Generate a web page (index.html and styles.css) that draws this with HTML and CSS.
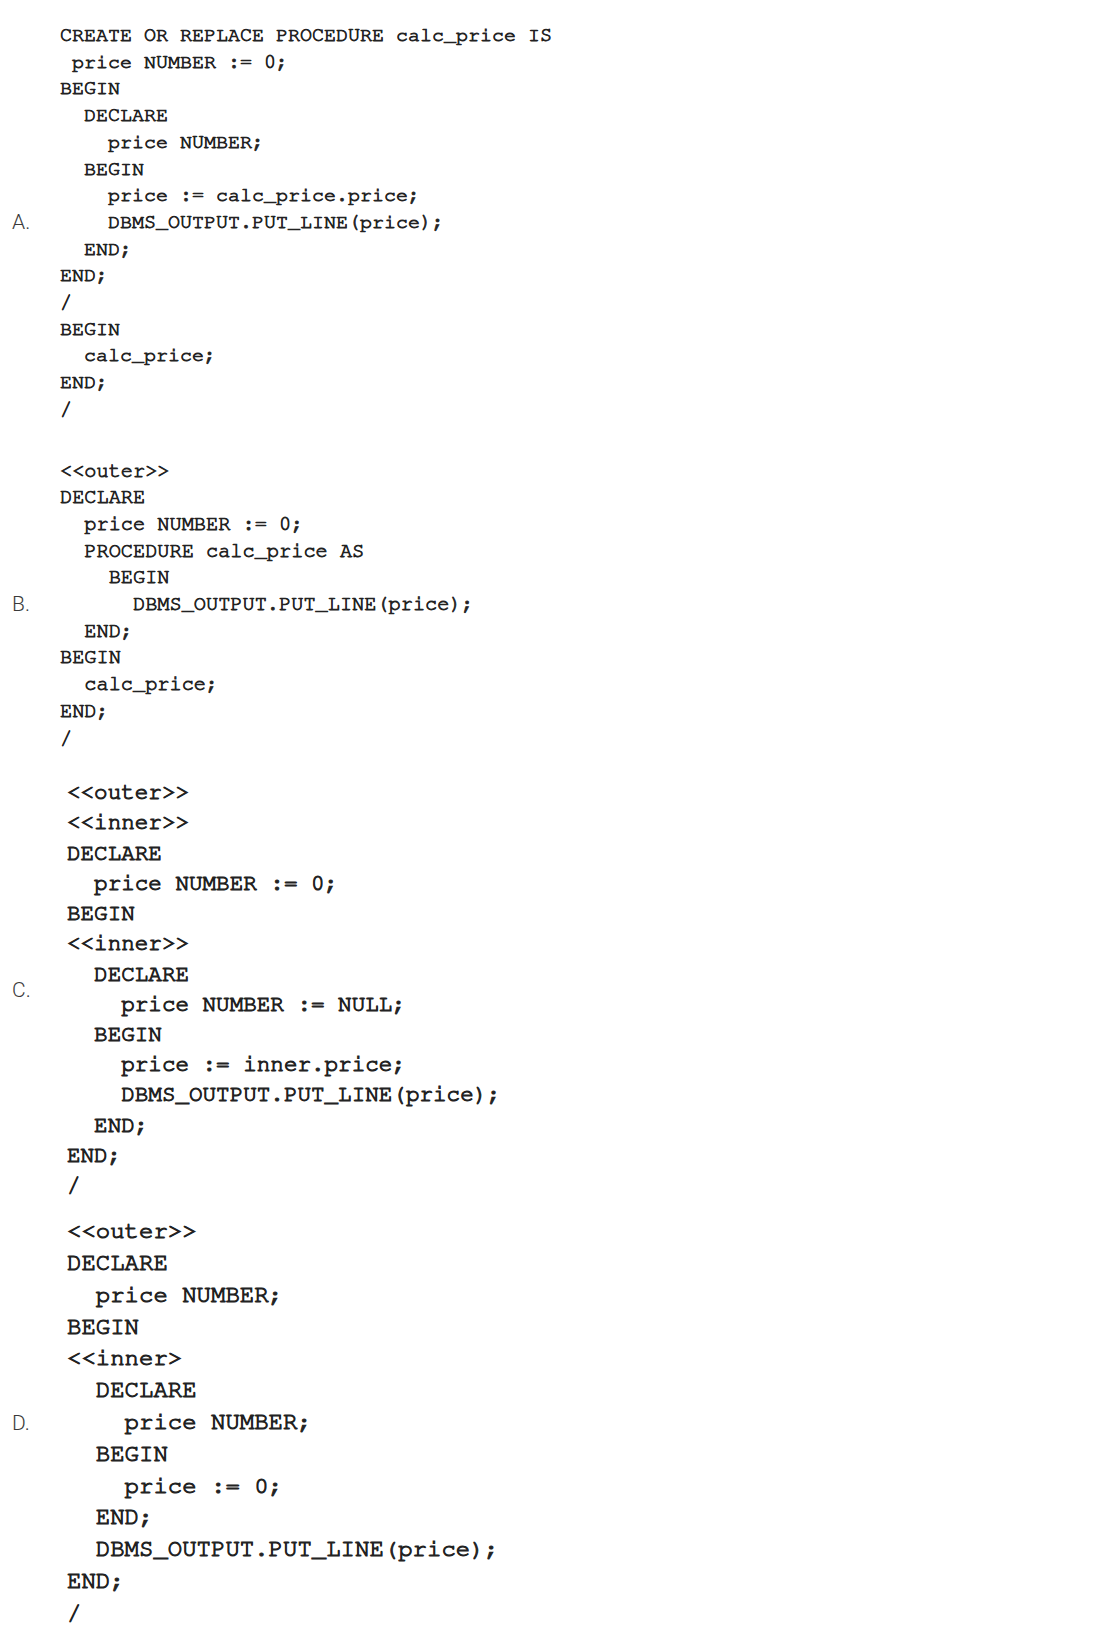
FILE: index.html
```html
<!DOCTYPE html>
<html lang="en">
<head>
<meta charset="utf-8">
<title>PL/SQL options</title>
<link rel="stylesheet" href="styles.css">
</head>
<body>
<main class="options">
  <section class="opt opt-a">
    <span class="lbl">A.</span>
<pre class="code">CREATE OR REPLACE PROCEDURE calc_price IS
 price NUMBER := 0;
BEGIN
  DECLARE
    price NUMBER;
  BEGIN
    price := calc_price.price;
    DBMS_OUTPUT.PUT_LINE(price);
  END;
END;
/
BEGIN
  calc_price;
END;
/</pre>
  </section>
  <section class="opt opt-b">
    <span class="lbl">B.</span>
<pre class="code">&lt;&lt;outer&gt;&gt;
DECLARE
  price NUMBER := 0;
  PROCEDURE calc_price AS
    BEGIN
      DBMS_OUTPUT.PUT_LINE(price);
  END;
BEGIN
  calc_price;
END;
/</pre>
  </section>
  <section class="opt opt-c">
    <span class="lbl">C.</span>
<pre class="code">&lt;&lt;outer&gt;&gt;
&lt;&lt;inner&gt;&gt;
DECLARE
  price NUMBER := 0;
BEGIN
&lt;&lt;inner&gt;&gt;
  DECLARE
    price NUMBER := NULL;
  BEGIN
    price := inner.price;
    DBMS_OUTPUT.PUT_LINE(price);
  END;
END;
/</pre>
  </section>
  <section class="opt opt-d">
    <span class="lbl">D.</span>
<pre class="code">&lt;&lt;outer&gt;&gt;
DECLARE
  price NUMBER;
BEGIN
&lt;&lt;inner&gt;
  DECLARE
    price NUMBER;
  BEGIN
    price := 0;
  END;
  DBMS_OUTPUT.PUT_LINE(price);
END;
/</pre>
  </section>
</main>
</body>
</html>
```
FILE: styles.css
```css
html, body {
  margin: 0;
  padding: 0;
  background: #ffffff;
}

.options {
  display: flex;
  flex-direction: column;
  padding-top: 22px;
}

.opt {
  display: flex;
  align-items: center;
}

.lbl {
  flex: 0 0 auto;
  box-sizing: border-box;
  padding-left: 12px;
  font-family: Roboto, "Liberation Sans", sans-serif;
  font-weight: 300;
  font-size: 21px;
  color: #3a3a3a;
}

.code {
  margin: 0;
  font-family: "Nimbus Mono PS", "Nimbus Mono L", "FreeMono", "Liberation Mono", monospace;
  color: #222222;
  white-space: pre;
  -webkit-text-stroke: 0.8px #222222;
}

.opt-a .lbl,
.opt-b .lbl {
  width: 60px;
}

.opt-c .lbl,
.opt-d .lbl {
  width: 67px;
}

.opt-a .code {
  font-size: 20px;
  line-height: 26.7px;
}

.opt-b {
  margin-top: 35px;
}

.opt-b .code {
  font-size: 20.3px;
  line-height: 26.7px;
}

.opt-c {
  margin-top: 27px;
}

.opt-c .code {
  font-size: 22.6px;
  line-height: 30.2px;
  -webkit-text-stroke: 1px #222222;
}

.opt-d {
  margin-top: 15px;
}

.opt-d .code {
  font-size: 24px;
  line-height: 31.8px;
  -webkit-text-stroke: 1px #222222;
}
```
